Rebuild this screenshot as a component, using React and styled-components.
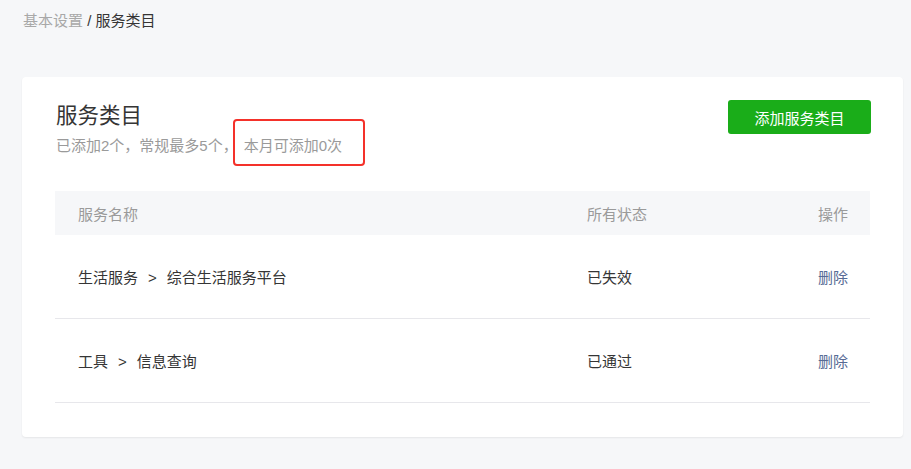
import React from "react";
import styled, { createGlobalStyle } from "styled-components";

const GlobalStyle = createGlobalStyle`
  html, body {
    margin: 0;
    padding: 0;
    background: #f6f7f9;
    font-family: "Liberation Sans", "Noto Sans CJK SC", sans-serif;
    font-size: 15px;
    color: #353535;
  }
`;

const Page = styled.div`
  padding: 11px 22px 33px 22px;
  width: 881px;
`;

const Breadcrumb = styled.div`
  font-size: 15px;
  line-height: 20px;
  padding-left: 1px;
  color: #353535;
  margin-bottom: 46px;

  span {
    color: #a8a8a8;
  }
`;

const Card = styled.div`
  background: #fff;
  border-radius: 4px;
  box-shadow: 0 1px 2px rgba(0, 0, 0, 0.07);
  padding: 25px 33px 34px 33px;
`;

const Header = styled.div`
  display: flex;
  justify-content: space-between;
  align-items: flex-start;
  padding-left: 1px;
  margin-bottom: 35px;
`;

const Title = styled.h2`
  margin: 0;
  font-size: 21.5px;
  font-weight: 400;
  line-height: 28px;
  color: #353535;
`;

const Desc = styled.p`
  margin: 6px 0 0 0;
  font-size: 15px;
  line-height: 20px;
  color: #9a9a9a;
`;

const Marked = styled.span`
  position: relative;
  margin-left: 6px;

  &::after {
    content: "";
    position: absolute;
    left: -11px;
    right: -23px;
    top: -18px;
    bottom: -12px;
    border: 2px solid #f4312a;
    border-radius: 4px;
  }
`;

const AddButton = styled.button`
  margin-top: -2px;
  margin-right: -1px;
  width: 143px;
  height: 34px;
  border: none;
  border-radius: 3px;
  background: #1aad19;
  color: #fff;
  font-family: inherit;
  font-size: 15px;
  cursor: pointer;
`;

const Table = styled.div`
  display: flex;
  flex-direction: column;
`;

const Row = styled.div`
  display: grid;
  grid-template-columns: 509px 1fr 120px;
  align-items: center;
  height: ${(p) => (p.$head ? "44px" : "83px")};
  padding: 0 22px 0 23px;
  background: ${(p) => (p.$head ? "#f6f7f9" : "#fff")};
  color: ${(p) => (p.$head ? "#9a9a9a" : "#353535")};
  border-bottom: ${(p) => (p.$head ? "none" : "1px solid #e7e7eb")};
`;

const Cell = styled.div`
  text-align: ${(p) => (p.$right ? "right" : "left")};
`;

const Arrow = styled.span`
  margin: 0 10px;
`;

const Link = styled.a`
  color: #576b95;
  text-decoration: none;
  cursor: pointer;
`;

const rows = [
  { cat: "生活服务", sub: "综合生活服务平台", status: "已失效" },
  { cat: "工具", sub: "信息查询", status: "已通过" },
];

export default function App() {
  return (
    <>
      <GlobalStyle />
      <Page>
        <Breadcrumb>
          <span>基本设置</span> / 服务类目
        </Breadcrumb>
        <Card>
          <Header>
            <div>
              <Title>服务类目</Title>
              <Desc>
                已添加2个，常规最多5个，<Marked>本月可添加0次</Marked>
              </Desc>
            </div>
            <AddButton>添加服务类目</AddButton>
          </Header>
          <Table>
            <Row $head>
              <Cell>服务名称</Cell>
              <Cell>所有状态</Cell>
              <Cell $right>操作</Cell>
            </Row>
            {rows.map((r) => (
              <Row key={r.sub}>
                <Cell>
                  {r.cat}
                  <Arrow>&gt;</Arrow>
                  {r.sub}
                </Cell>
                <Cell>{r.status}</Cell>
                <Cell $right>
                  <Link>删除</Link>
                </Cell>
              </Row>
            ))}
          </Table>
        </Card>
      </Page>
    </>
  );
}
